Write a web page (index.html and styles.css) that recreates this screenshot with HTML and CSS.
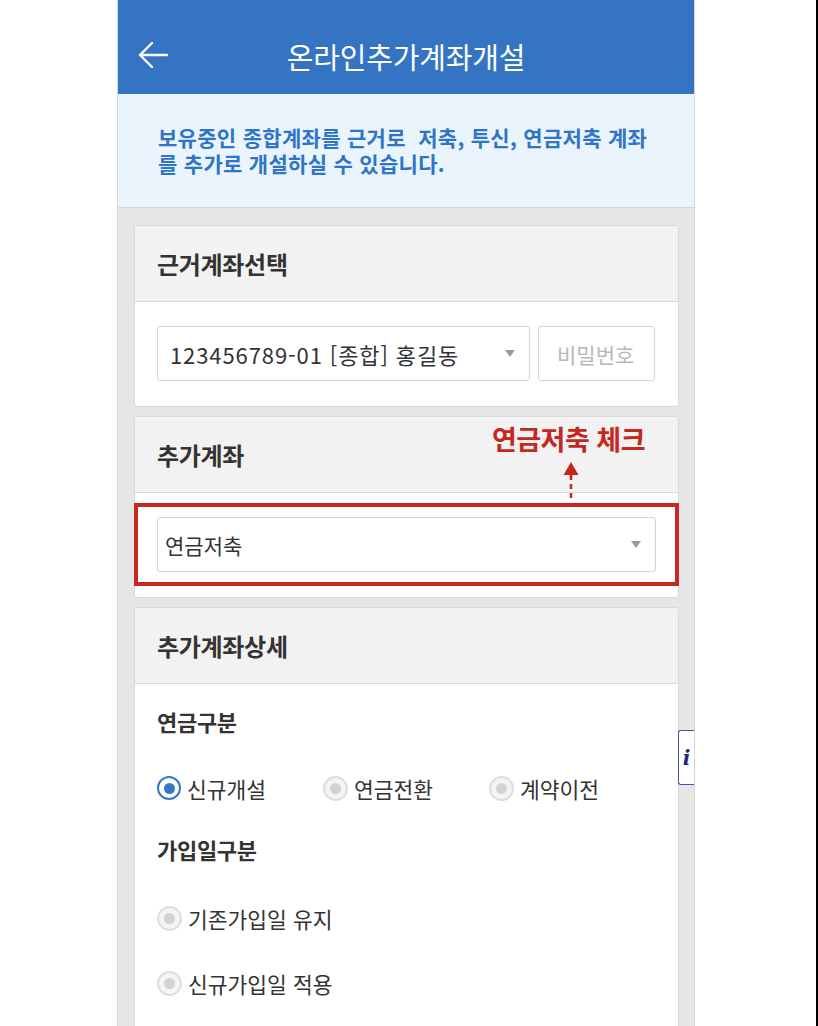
FILE: index.html
```html
<!DOCTYPE html>
<html lang="ko">
<head>
  <meta charset="UTF-8">
  <meta name="viewport" content="width=device-width, initial-scale=1.0">
  <title>온라인추가계좌개설</title>
  <link rel="stylesheet" href="styles.css">
</head>
<body>
  <div class="page">
    <div class="phone">
      <div class="topbar">
        <a href="#" class="back-btn">
          <svg width="30" height="28" viewBox="0 0 30 28">
            <path d="M2 14 H29 M14 2 L2 14 L14 26" fill="none" stroke="#fff" stroke-width="2.4" stroke-linecap="round" stroke-linejoin="round"/>
          </svg>
        </a>
        <h1>온라인추가계좌개설</h1>
        <span></span>
      </div>

      <div class="notice">
        <p>보유중인 종합계좌를 근거로&nbsp; 저축, 투신, 연금저축 계좌</p>
        <p>를 추가로 개설하실 수 있습니다.</p>
      </div>

      <div class="content">
        <div class="card">
          <div class="card-head">근거계좌선택</div>
          <div class="card-body account-row">
            <div class="select-box wide">
              <span>123456789-01 [종합] 홍길동</span>
              <i class="caret"></i>
            </div>
            <div class="pw-box">비밀번호</div>
          </div>
        </div>

        <div class="card">
          <div class="card-head">추가계좌</div>
          <!-- 안내 표시 -->
          <div class="note">연금저축 체크</div>
          <svg class="note-arrow" width="16" height="38" viewBox="0 0 16 38">
            <path d="M8 0 L15.5 13 L0.5 13 Z" fill="#c4281f"/>
            <line x1="8" y1="13" x2="8" y2="38" stroke="#c4281f" stroke-width="2.5" stroke-dasharray="5 4"/>
          </svg>
          <div class="card-body mark-body">
            <div class="mark">
              <div class="select-box full">
                <span>연금저축</span>
                <i class="caret"></i>
              </div>
            </div>
          </div>
        </div>

        <div class="card last">
          <div class="card-head">추가계좌상세</div>
          <div class="card-body detail">
            <div class="field-label">연금구분</div>
            <div class="radio-row">
              <label class="radio"><span class="dot on"></span>신규개설</label>
              <label class="radio"><span class="dot"></span>연금전환</label>
              <label class="radio"><span class="dot"></span>계약이전</label>
            </div>
            <div class="field-label second">가입일구분</div>
            <div class="radio-col">
              <label class="radio"><span class="dot"></span>기존가입일 유지</label>
              <label class="radio"><span class="dot"></span>신규가입일 적용</label>
            </div>
          </div>
        </div>
      </div>

      <div class="info-tab">i</div>
    </div>
    <div class="edge"></div>
  </div>
</body>
</html>
```

FILE: styles.css
```css
body {
  margin: 0;
  font-family: "Noto Sans CJK KR", "Noto Sans", sans-serif;
  background: #fff;
  color: #333;
}
.page {
  display: flex;
  height: 100vh;
  overflow: hidden;
}
.phone {
  position: relative;
  width: 576px;
  margin-left: 117px;
  border-left: 1px solid #d6d6d6;
  border-right: 1px solid #d6d6d6;
  background: #e6e6e6;
}
.edge {
  width: 2px;
  margin-left: auto;
  background: #000;
}
.topbar {
  display: grid;
  grid-template-columns: 80px 1fr 80px;
  align-items: center;
  height: 94px;
  background: #3474c3;
}
.back-btn {
  display: flex;
  padding-left: 20px;
  padding-top: 16px;
}
.topbar h1 {
  margin: 0;
  text-align: center;
  color: #fff;
  font-size: 29px;
  font-weight: 400;
  padding-top: 18px;
  letter-spacing: -0.2px;
}
.notice {
  height: 83px;
  padding: 30px 40px 0;
  background: #e9f4fd;
  border-bottom: 1px solid #d8d8d8;
  color: #2f74c5;
  font-size: 21px;
  font-weight: 700;
  line-height: 26px;
  letter-spacing: 0.3px;
  white-space: nowrap;
}
.notice p {
  margin: 0;
}
.content {
  display: flex;
  flex-direction: column;
  gap: 9px;
  padding: 17px 15px 0 16px;
}
.card {
  position: relative;
  background: #fff;
  border: 1px solid #d9d9d9;
  border-radius: 3px;
}
.card-head {
  height: 75px;
  padding-left: 22px;
  display: flex;
  align-items: center;
  background: #f2f2f2;
  border-bottom: 1px solid #d9d9d9;
  font-size: 24px;
  font-weight: 700;
  color: #333;
  letter-spacing: -0.3px;
}
.account-row {
  display: flex;
  gap: 8px;
  padding: 24px 22px 25px;
}
.select-box {
  height: 53px;
  display: flex;
  align-items: center;
  justify-content: space-between;
  border: 1px solid #d4d4d4;
  border-radius: 3px;
  font-size: 22px;
  color: #333;
  box-sizing: content-box;
  letter-spacing: 0.9px;
}
.select-box.wide {
  width: 345px;
  padding: 0 14px 0 12px;
}
.select-box.full {
  padding: 0 14px 0 7px;
  font-size: 21px;
  letter-spacing: 0;
}
.caret {
  width: 0;
  height: 0;
  border-left: 5px solid transparent;
  border-right: 5px solid transparent;
  border-top: 7px solid #9a9a9a;
}
.pw-box {
  width: 97px;
  height: 53px;
  padding-left: 18px;
  display: flex;
  align-items: center;
  border: 1px solid #d4d4d4;
  border-radius: 3px;
  font-size: 21px;
  color: #b8b8b8;
}
.note {
  position: absolute;
  top: 6px;
  right: 33px;
  color: #c4281f;
  font-size: 27px;
  font-weight: 700;
  line-height: 32px;
  letter-spacing: -0.5px;
}
.note-arrow {
  position: absolute;
  top: 45px;
  left: 428px;
}
.mark-body {
  padding: 10px 0 11px;
}
.mark {
  margin: 0 -1px;
  padding: 10px 19px;
  border: 4px solid #c4281f;
}
.detail {
  padding: 24px 22px 40px;
}
.field-label {
  font-size: 22px;
  font-weight: 700;
  line-height: 26px;
  color: #333;
  letter-spacing: -0.3px;
}
.field-label.second {
  margin-top: 33px;
}
.radio-row {
  display: flex;
  margin-top: 39px;
}
.radio-row .radio {
  width: 166px;
}
.radio-col {
  display: flex;
  flex-direction: column;
  gap: 35px;
  margin-top: 41px;
}
.radio {
  display: flex;
  align-items: center;
  gap: 6px;
  height: 30px;
  font-size: 21.5px;
  color: #333;
}
.dot {
  width: 21px;
  height: 21px;
  border-radius: 50%;
  border: 2px solid #dedede;
  background: #f4f4f4;
  display: flex;
  align-items: center;
  justify-content: center;
  flex-shrink: 0;
}
.dot::after {
  content: "";
  width: 11px;
  height: 11px;
  border-radius: 50%;
  background: #d2d2d2;
}
.dot.on {
  border: 2.5px solid #3578c8;
  background: #fff;
  width: 20px;
  height: 20px;
}
.dot.on::after {
  background: #3578c8;
}
.info-tab {
  position: absolute;
  top: 730px;
  right: 0;
  width: 15px;
  height: 53px;
  display: flex;
  align-items: center;
  justify-content: center;
  background: #fff;
  border: 1px solid #4357a8;
  border-right: none;
  border-radius: 3px 0 0 3px;
  font-family: "DejaVu Serif", "Liberation Serif", serif;
  font-style: italic;
  font-weight: 700;
  font-size: 20px;
  color: #1d2a7a;
}
```
